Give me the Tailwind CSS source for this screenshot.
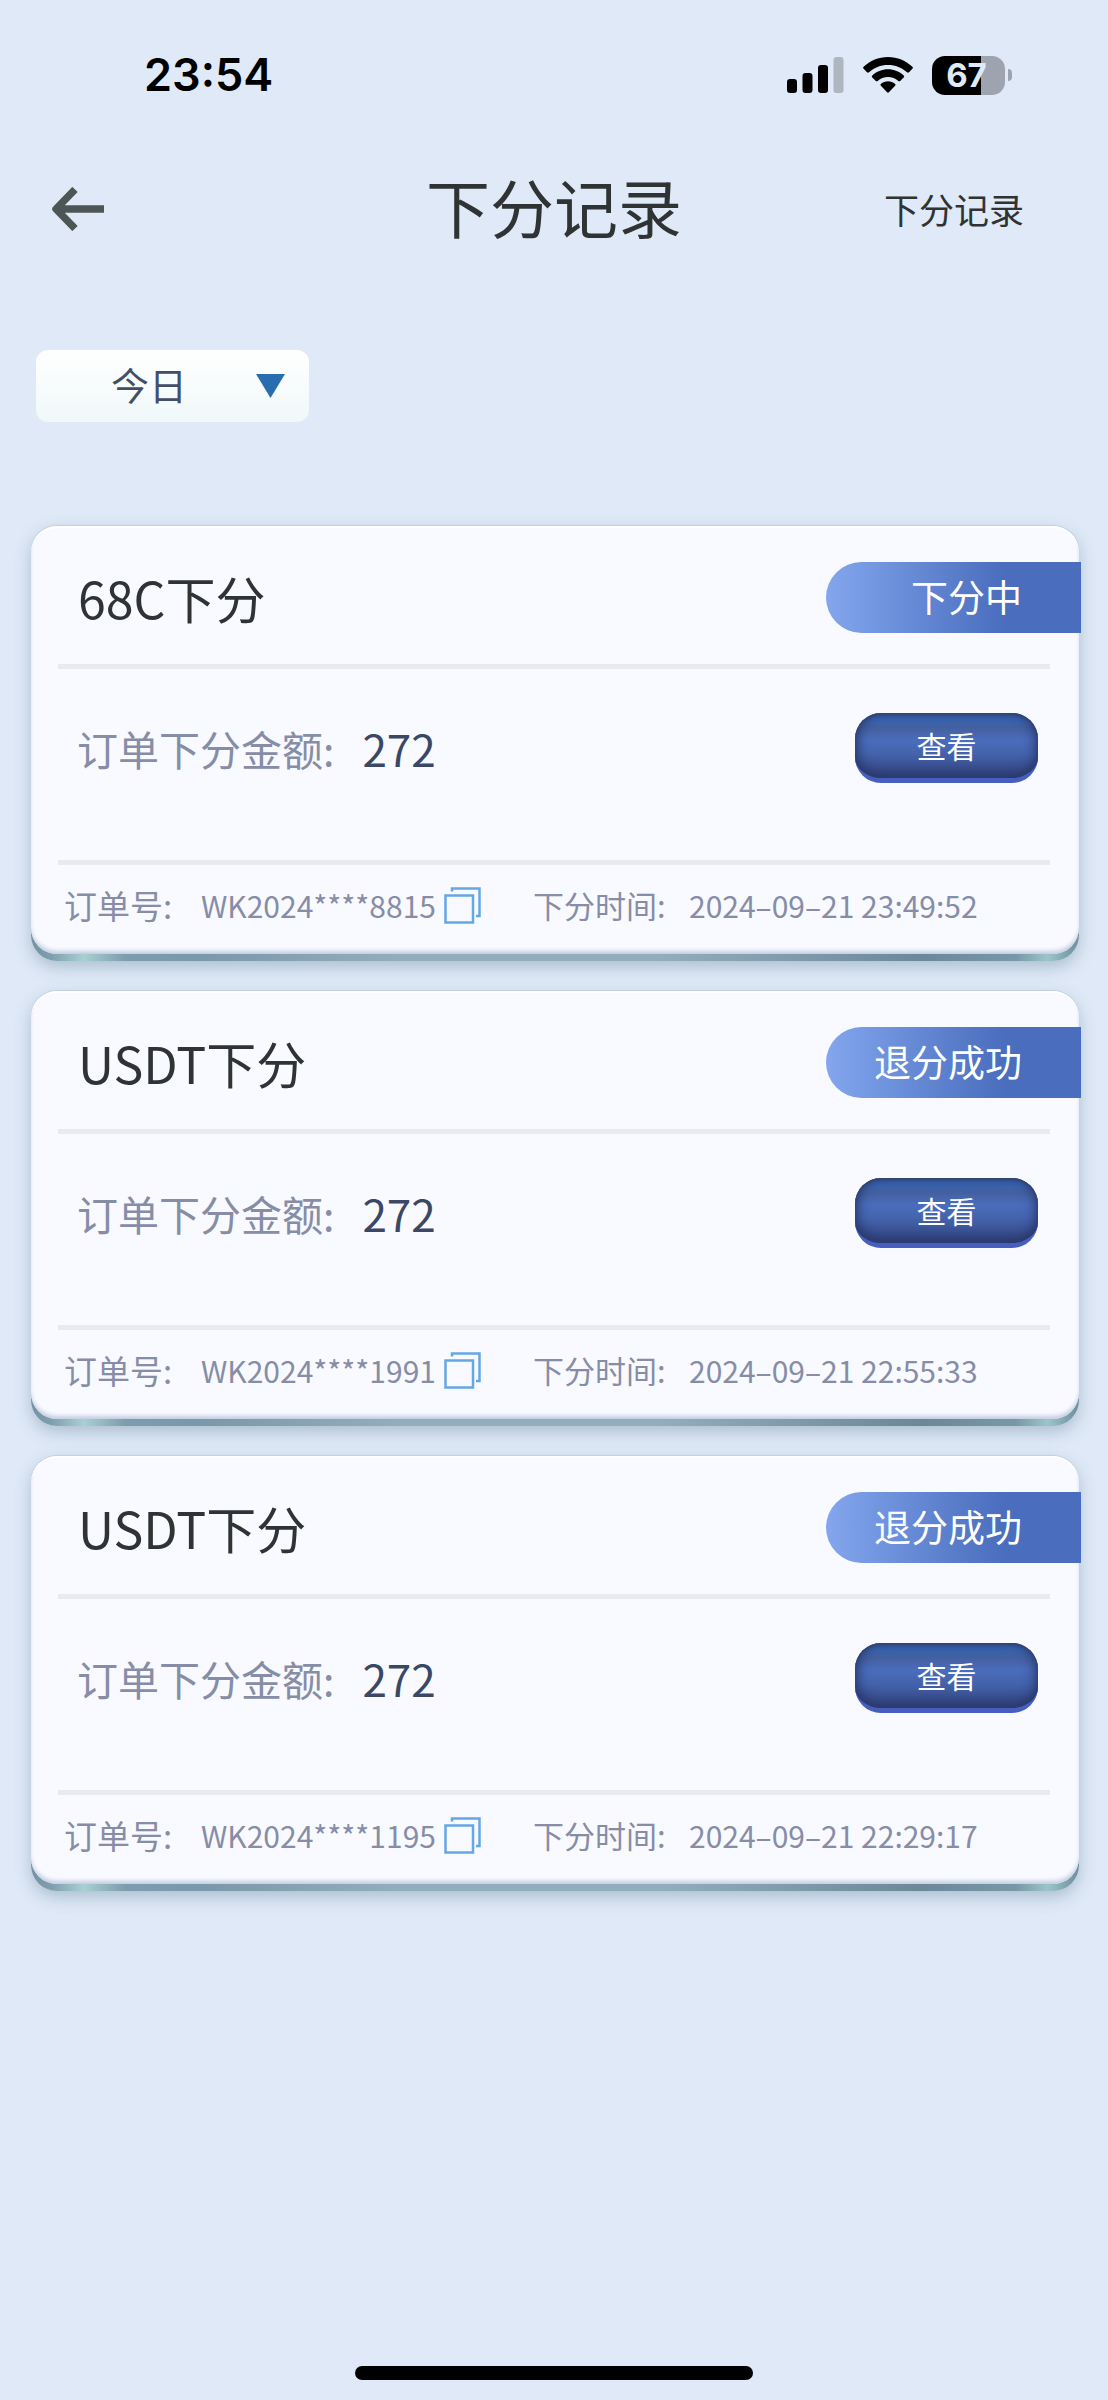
<!DOCTYPE html>
<html lang="zh-CN">
<head>
    <meta charset="UTF-8">
    <meta name="viewport" content="width=device-width, initial-scale=1.0">
    <title>下分记录</title>
    <script src="https://cdn.jsdelivr.net/npm/@tailwindcss/browser@4"></script>
</head>
<body class="bg-[#dfe9f7] text-[#2f3333] font-['Noto_Sans_CJK_SC',sans-serif]">
    <div class="flex flex-col min-h-screen">
        <!-- 状态栏 -->
        <div class="flex items-center justify-between pt-[46px] pl-36 pr-24 text-black">
            <span class="font-['Inter',sans-serif] font-semibold text-[45px] leading-[58px]">23:54</span>
            <div class="flex items-center gap-[19px]">
                <svg class="w-[57px] h-9" viewBox="0 0 57 36" fill="currentColor" aria-hidden="true">
                    <rect x="0" y="22" width="10" height="14" rx="3"/>
                    <rect x="15.5" y="16" width="10" height="20" rx="3"/>
                    <rect x="31" y="8" width="10" height="28" rx="3"/>
                    <rect x="46.5" y="0" width="10" height="36" rx="3" opacity=".22"/>
                </svg>
                <svg class="w-[50px] h-9" viewBox="0 0 50 36" fill="currentColor" aria-hidden="true">
                    <path d="M25 0C15.600 0 7 3.700 .6 9.800c-.6.600-.6 1.400 0 2l3.400 3.400c.6.600 1.400.600 2 0C11 10.600 17.600 7.900 25 7.900s14 2.700 19 7.300c.6.600 1.400.600 2 0l3.400-3.400c.6-.6.6-1.400 0-2C43 3.700 34.400 0 25 0z"/>
                    <path d="M25 12.300c-6 0-11.500 2.300-15.700 6.100-.6.600-.6 1.400 0 2l3.500 3.500c.5.500 1.300.5 1.900 0 2.800-2.400 6.300-3.800 10.300-3.800s7.500 1.400 10.300 3.800c.6.500 1.400.5 1.900 0l3.500-3.500c.6-.6.6-1.400 0-2C36.500 14.600 31 12.300 25 12.300z"/>
                    <path d="M25 24.300c-2.700 0-5.100.9-7 2.400-.7.500-.7 1.400-.1 2l6.200 6.600c.5.600 1.300.6 1.800 0l6.200-6.600c.6-.6.6-1.500-.1-2-1.900-1.500-4.300-2.400-7-2.400z"/>
                </svg>
                <div class="flex items-center gap-[3px]">
                    <div class="w-[73px] h-[39px] pr-1 rounded-[13px] bg-linear-to-r from-black from-67% to-[#9da4af] to-67% flex items-center justify-center font-['Inter',sans-serif] font-bold text-[33px] leading-none text-[#dfe9f7]">67</div>
                    <div class="w-1 h-3 rounded-r-full bg-[#9da4af]"></div>
                </div>
            </div>
        </div>

        <!-- 导航 -->
        <header class="grid grid-cols-3 items-center mt-[57px] pl-[52px] pr-[84px]">
            <button type="button" aria-label="返回" class="justify-self-start">
                <svg class="w-[52px] h-11" viewBox="0 0 52 44" fill="none" stroke="#4d5654" stroke-width="7.500" stroke-linejoin="round" aria-hidden="true">
                    <path d="M52 22H6M23 2.500L4 22l19 19.500"/>
                </svg>
            </button>
            <h1 class="justify-self-center whitespace-nowrap text-[64px] leading-[88px] pl-8 pb-2">下分记录</h1>
            <a href="#" class="justify-self-end text-[35px] leading-[48px]">下分记录</a>
        </header>

        <main class="flex flex-col flex-1 pl-[31px] pr-[29px]">
            <div class="relative self-start mt-[93px] ml-[5px]">
                <select aria-label="日期" class="appearance-none w-[273px] h-[72px] pl-[75px] pb-1 rounded-xl bg-linear-to-b from-white to-[#f0f8fa] text-[38px] leading-[56px] text-[#434f69]">
                    <option>今日</option>
                    <option>昨日</option>
                    <option>近七日</option>
                </select>
                <svg class="absolute right-6 top-6 w-[29px] h-6 pointer-events-none" viewBox="0 0 29 24" fill="#286dae" aria-hidden="true">
                    <path d="M0 0h29L14.500 24z"/>
                </svg>
            </div>

            <div id="list" class="flex flex-col gap-[30px] mt-[104px]"></div>
        </main>

        <div class="w-[36%] h-[14px] mb-5 rounded-full bg-black self-center"></div>
    </div>

    <script>
        const orders = [
            { type: '68C下分', status: '下分中', amount: 272, no: 'WK2024****8815', time: '2024–09–21 23:49:52' },
            { type: 'USDT下分', status: '退分成功', amount: 272, no: 'WK2024****1991', time: '2024–09–21 22:55:33' },
            { type: 'USDT下分', status: '退分成功', amount: 272, no: 'WK2024****1195', time: '2024–09–21 22:29:17' }
        ];

        document.getElementById('list').innerHTML = orders.map(o => `
            <article class="pb-[7px] rounded-[26px] shadow-[0_6px_16px_rgba(110,140,160,0.45),0_-1px_0_#cdd8e2] bg-[linear-gradient(90deg,#7393a4,#7f9fae_2%,#a8d0d2_5%,#7e9caf_9%,#7a98ab_16%,#92adbd_35%,#92adbd_60%,#6b889b_85%,#7898a9_94%,#9cc5c8_97%,#6d8d9e)]">
                <div class="rounded-[26px] bg-[#f8faff] shadow-[inset_0_2px_1px_#ffffff,inset_0_-4px_4px_-1px_#c3cbe2]">
                    <div class="flex items-center justify-between h-[138px] pt-1 pl-[47px]">
                        <h2 class="text-[50px] leading-[72px]">${o.type}</h2>
                        <span class="flex items-center justify-end w-[255px] h-[71px] pr-[59px] -mr-[2px] rounded-l-full bg-linear-to-r from-[#83a6ee] to-[#4a6dbd] to-70% text-white text-[37px]">${o.status}</span>
                    </div>
                    <hr class="ml-[27px] mr-[29px] border-t-[5px] border-[#e8eaf0]">
                    <div class="flex items-start justify-between pt-11 pb-[77px] pl-[46px] pr-[41px]">
                        <p class="flex items-center gap-7 pt-1 leading-[62px]">
                            <span class="text-[41px] text-[#878da6]">订单下分金额:</span>
                            <span class="text-[44px] text-[#3a4765]">${o.amount}</span>
                        </p>
                        <button type="button" class="w-[183px] h-[70px] rounded-[26px] border-b-[5px] border-[#465fbf] bg-[linear-gradient(180deg,#3565bd,#3b67b3_12%,#4560a0_22%,#4a6cbc_42%,#4463ac_62%,#34437f)] shadow-[inset_0_2px_2px_#35456f,inset_0_-3px_12px_#2a3669,inset_0_0_14px_#2c457c] text-white text-[30px]">查看</button>
                    </div>
                    <hr class="ml-[27px] mr-[29px] border-t-[5px] border-[#e8eaf0]">
                    <div class="flex items-center h-[89px] pb-2 pl-[33px] whitespace-nowrap text-[#878da6]">
                        <span class="w-[137px] text-[33px]">订单号:</span>
                        <span class="w-[243px] text-[30px]">${o.no}</span>
                        <button type="button" aria-label="复制订单号">
                            <svg class="w-[37px] h-[37px]" viewBox="0 0 37 37" fill="none" stroke="#64a7e6" stroke-width="2.500" aria-hidden="true">
                                <path d="M8 4.500V1.500h27.500V29h-3.500M1.500 8.500h27.500v27H1.500z"/>
                            </svg>
                        </button>
                        <span class="w-[156px] ml-[52px] text-[31px]">下分时间:</span>
                        <time class="text-[30px]">${o.time}</time>
                    </div>
                </div>
            </article>`).join('');
    </script>
</body>
</html>
